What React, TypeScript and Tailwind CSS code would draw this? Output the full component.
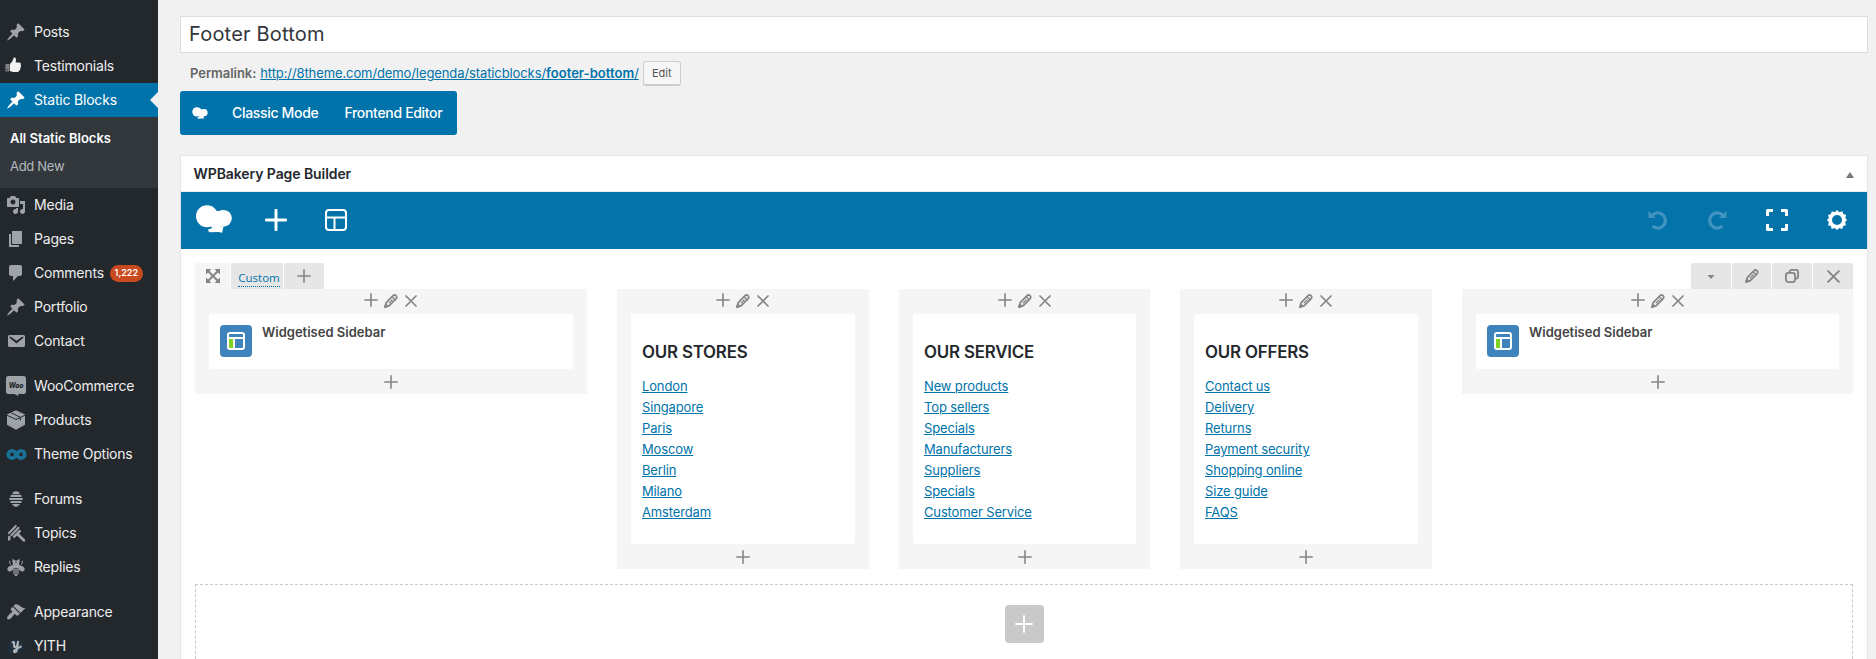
import React from "react";

const ICONS: Record<string, string> = {
  pin: "M10.44 3.02l1.82-1.82 6.36 6.35-1.83 1.82c-1.05-.68-2.48-.57-3.41.36l-.75.75c-.92.93-1.04 2.35-.35 3.41l-1.83 1.82-2.41-2.41-2.8 2.79c-.42.42-3.38 2.71-3.8 2.29s1.86-3.39 2.28-3.81l2.79-2.79L4.1 9.36l1.83-1.82c1.05.69 2.48.57 3.4-.36l.75-.75c.93-.92 1.05-2.35.36-3.41z",
  media: "M13 11V4c0-.55-.45-1-1-1h-1.67L9 1H5L3.67 3H2c-.55 0-1 .45-1 1v7c0 .55.45 1 1 1h10c.55 0 1-.45 1-1zM7 4.5c1.38 0 2.5 1.12 2.5 2.5S8.38 9.5 7 9.5 4.5 8.38 4.5 7 5.62 4.5 7 4.5zM14 6h5v10.5c0 1.38-1.12 2.5-2.5 2.5S14 17.88 14 16.5s1.12-2.5 2.5-2.5c.17 0 .34.02.5.05V9h-3V6zm-4 8.05V13h2v3.5c0 1.38-1.12 2.5-2.5 2.5S7 17.88 7 16.5 8.12 14 9.5 14c.17 0 .34.02.5.05z",
  pages: "M6 15V2h10v13H6zm-1 1h8v2H3V5h2v11z",
  comments: "M5 2h9c1.1 0 2 .9 2 2v7c0 1.1-.9 2-2 2h-2l-5 5v-5H5c-1.1 0-2-.9-2-2V4c0-1.1.9-2 2-2z",
  mail: "M3.87 4h13.25C18.37 4 19 4.59 19 5.79v8.42c0 1.19-.63 1.79-1.88 1.79H3.87c-1.25 0-1.88-.6-1.88-1.79V5.79c0-1.2.63-1.79 1.88-1.79zm6.62 8.6l6.74-5.53c.24-.2.43-.66.13-1.07-.29-.41-.82-.42-1.17-.17l-5.7 3.86L4.8 5.83c-.35-.25-.88-.24-1.17.17-.3.41-.11.87.13 1.07z",
  brush: "M14.48 11.06L7.41 3.99l1.5-1.5c.5-.56 2.3-.47 3.51.32 1.21.8 1.43 1.28 2.91 2.1 1.18.64 2.45 1.26 4.45.85zm-.71.71L6.7 4.7 4.93 6.47c-.39.39-.39 1.02 0 1.41l1.06 1.06c.39.39.39 1.03 0 1.42-.6.6-1.43 1.11-2.21 1.69-.35.26-.7.53-1.01.84C1.43 14.23.4 16.08 1.4 17.07c.99 1 2.84-.03 4.18-1.36.31-.31.58-.66.85-1.02.57-.78 1.08-1.61 1.69-2.21.39-.39 1.02-.39 1.41 0l1.06 1.06c.39.39 1.02.39 1.41 0z",
};

function MenuIcon({ name }: { name: string }) {
  let body: React.ReactNode;
  switch (name) {
    case "thumb":
      body = (
        <>
          <rect x="-.6" y="8" width="3.8" height="7.4" fill="#7d8186" />
          <rect x=".6" y="13" width="1.2" height="1.2" fill="#23282d" />
          <path fill="#f1f1f1" d="M3.8 8.2C5.6 6.6 7 4.8 7.4 2.6c.1-1 1.2-1.6 2-.8.9.9.6 3 .2 4.7h3.6c1.3 0 2 1 1.5 2 .5.6.5 1.5 0 2 .3.8.1 1.5-.5 1.9.2 1.1-.1 1.8-.9 2.2-.2.9-.8 1.3-1.8 1.3H7.3c-1.4 0-2.4-.6-3.5-.8z" />
        </>
      );
      break;
    case "woo":
      body = (
        <>
          <path d="M2.5 0h15A2.5 2.5 0 0 1 20 2.500v13a2.500 2.500 0 0 1-2.500 2.500H12l.5 2.200L8.500 18h-6A2.500 2.500 0 0 1 0 15.500v-13A2.500 2.500 0 0 1 2.500 0z" />
          <text x="10" y="11.800" textAnchor="middle" fontSize="7.200" fontWeight="800" fontStyle="italic" fill="#23282d" className="font-['Inter',sans-serif]" textLength="14.500" lengthAdjust="spacingAndGlyphs">Woo</text>
        </>
      );
      break;
    case "box":
      body = (
        <>
          <path d="M10 .2l9 4.300v10.300l-9 5-9-5V4.500z" />
          <path d="M1 5.200l9 4.300 9-4.300M5.300 2.900l9 4.400v3.200" fill="none" stroke="#23282d" strokeWidth="1" />
        </>
      );
      break;
    case "infinity":
      body = (
        <g fill="none" stroke="#1a7299" strokeWidth="3.600">
          <circle cx="6" cy="10.400" r="3.700" />
          <circle cx="15" cy="10.400" r="3.700" />
        </g>
      );
      break;
    case "hive":
      body = (
        <g>
          <path d="M6.200 5.300C6.200 3.300 8 2.200 10 2.200s3.800 1.100 3.800 3.100z" />
          <rect x="4.200" y="6" width="11.600" height="2" rx="1" />
          <rect x="3" y="9" width="14" height="2" rx="1" />
          <rect x="4.200" y="12" width="11.600" height="2" rx="1" />
          <path d="M6 15h8c-.4 1.400-1.500 1.600-2.200 2L10 18.300l-1.800-1.300c-.7-.4-1.800-.6-2.200-2z" />
        </g>
      );
      break;
    case "topics":
      body = (
        <g fill="none" stroke="#9ea3a8" strokeLinecap="round">
          <path d="M2.800 10.200l7-7.200M5.300 12.200l7.200-7.400" strokeWidth="2" />
          <path d="M8.200 13.700l5.500-5.500" strokeWidth="2.600" />
          <path d="M12 11.500l5.800 5.700" strokeWidth="2.800" />
          <path d="M3.200 14v2.400" strokeWidth="2.400" />
        </g>
      );
      break;
    case "bee":
      body = (
        <g>
          <circle cx="8" cy="4.600" r="1.800" />
          <circle cx="12" cy="4.600" r="1.800" />
          <rect x="7" y="5.800" width="6" height="3.600" />
          <path d="M8.500 8C5.500 8 2 9.300 1.400 11.600 1 13.600 2.400 14.600 4.200 14.400 6.500 14 8 11.500 9 9zM11.500 8c3 0 6.500 1.300 7.100 3.600.4 2-1 3-2.800 2.800C13.500 14 12 11.500 11 9z" />
          <path d="M7.200 9h5.600v6.500c0 1.500-1.300 2.900-2.800 3.700-1.500-.8-2.800-2.200-2.800-3.700z" />
          <path d="M7.600 11.800h4.800M7.600 14h4.800M7.800 16.200h4.400" stroke="#23282d" strokeWidth=".9" />
          <path d="M5.400 7.800C4 7 3.300 5.500 3.700 3.800M14.600 7.800c1.400-.8 2.100-2.300 1.700-4M7.500 3l-.9-1.200M12.500 3l.9-1.200" stroke="#9ea3a8" strokeWidth="1" fill="none" />
        </g>
      );
      break;
    case "yith":
      body = (
        <>
          <circle cx="10" cy="10" r="7.800" fill="#20303f" />
          <path d="M2.200 10v7.800H10z" fill="#20303f" />
          <path d="M6.500 6.300c1.700-.8 1.900.4 1.600 2-.4 1.900-.2 2.900 1.100 2.700 1.600-.3 2.400-2.700 2.800-5.200M12 5.800c-.2 4-.4 7.800-1.900 9.800-.8 1-2.300.9-2.200-.4.200-1.500 3.500-2.700 7-4.600" fill="none" stroke="#b0b5ba" strokeWidth="2" strokeLinecap="round" />
        </>
      );
      break;
    default:
      body = <path d={ICONS[name]} />;
  }
  return (
    <svg viewBox="0 0 20 20" className="h-5 w-5 shrink-0 overflow-visible" fill="currentColor">
      {body}
    </svg>
  );
}

function MenuItem({ icon, label, active, badge }: { icon: string; label: string; active?: boolean; badge?: string }) {
  return (
    <div
      className={
        "relative flex h-[34px] shrink-0 items-center gap-2 pl-1.5 text-[14px] tracking-[-0.2px] " +
        (active ? "bg-[#0073aa] text-white" : "text-[#eee]")
      }
    >
      <span className={active ? "text-white" : "text-[#9ea3a8]"}>
        <MenuIcon name={icon} />
      </span>
      <span className="pb-0.5">{label}</span>
      {badge && (
        <span className="-ml-[2px] flex h-[17px] w-[33px] items-center justify-center rounded-full bg-[#ca4a1f] text-[9px] font-semibold tracking-normal text-white">
          {badge}
        </span>
      )}
      {active && (
        <span className="absolute top-[9px] right-0 h-0 w-0 border-y-8 border-r-8 border-y-transparent border-r-[#f1f1f1]" />
      )}
    </div>
  );
}

function Sidebar() {
  return (
    <nav className="flex w-[158px] shrink-0 flex-col overflow-hidden bg-[#23282d] pt-[15px]">
      <MenuItem icon="pin" label="Posts" />
      <MenuItem icon="thumb" label="Testimonials" />
      <MenuItem icon="pin" label="Static Blocks" active />
      <div className="flex h-[71px] shrink-0 flex-col bg-[#32373c] pt-[7px] pl-2.5 text-[13px] leading-7">
        <span className="font-semibold text-white">All Static Blocks</span>
        <span className="tracking-[-0.3px] text-[#b4b9be]">Add New</span>
      </div>
      <MenuItem icon="media" label="Media" />
      <MenuItem icon="pages" label="Pages" />
      <MenuItem icon="comments" label="Comments" badge="1,222" />
      <MenuItem icon="pin" label="Portfolio" />
      <MenuItem icon="mail" label="Contact" />
      <div className="h-[11px] shrink-0" />
      <MenuItem icon="woo" label="WooCommerce" />
      <MenuItem icon="box" label="Products" />
      <MenuItem icon="infinity" label="Theme Options" />
      <div className="h-[11px] shrink-0" />
      <MenuItem icon="hive" label="Forums" />
      <MenuItem icon="topics" label="Topics" />
      <MenuItem icon="bee" label="Replies" />
      <div className="h-[11px] shrink-0" />
      <MenuItem icon="brush" label="Appearance" />
      <MenuItem icon="yith" label="YITH" />
    </nav>
  );
}

function Logo({ className }: { className: string }) {
  return (
    <svg viewBox="0 0 36 28" className={className} fill="#fff">
      <circle cx="11" cy="11.300" r="11" />
      <circle cx="27.400" cy="13.300" r="8.400" />
      <path d="M17 3.500c2.500 2.700 5 3 9 2v16l-11 1z" />
      <path d="M12 24.500c3-.5 4.500-1.500 6-3.500l9.500.500-1.400 6.200-3.600-.700-9.500.200z" />
    </svg>
  );
}

function Plus({ size, stroke = 1.6 }: { size: number; stroke?: number }) {
  return (
    <svg viewBox="0 0 14 14" width={size} height={size} className="shrink-0" fill="none" stroke="currentColor" strokeWidth={stroke} strokeLinecap="round">
      <path d="M7 .8v12.400M.8 7h12.400" />
    </svg>
  );
}

function Cross({ className }: { className: string }) {
  return (
    <svg viewBox="0 0 12 12" className={className} fill="none" stroke="currentColor" strokeWidth="1.700" strokeLinecap="round">
      <path d="M1 1l10 10M11 1L1 11" />
    </svg>
  );
}

function Pencil({ className }: { className: string }) {
  return (
    <svg viewBox="0 0 14 14" className={className} fill="none" stroke="currentColor" strokeLinejoin="round">
      <path d="M1 13l1.200-4.300 6.600-6.800c1-1.100 2.200-1.100 3.200-.3 1 1 1 2.200 0 3.200L5.300 11.600z" strokeWidth="1.700" />
      <path d="M4.800 9.400l3.800-3.900" strokeWidth="1.200" />
      <path d="M8.200 2.800l3 3M.8 13.300l1-3 2.200 2z" strokeWidth="1.400" />
    </svg>
  );
}

function Column({ children }: { children: React.ReactNode }) {
  return (
    <div className="flex flex-col bg-[#f5f5f5] px-3.5 text-[#858585]">
      <div className="flex h-[25px] items-center justify-center gap-1.5 pr-px pb-[3px]">
        <Plus size={14} />
        <Pencil className="mt-0.5 h-3.5 w-3.5" />
        <Cross className="mt-px ml-[1px] h-3 w-3" />
      </div>
      <div className="rounded-xs bg-white">{children}</div>
      <div className="flex h-[25px] items-center justify-center">
        <Plus size={14} />
      </div>
    </div>
  );
}

function WidgetCard() {
  return (
    <div className="flex h-[55px] gap-2.5 p-[11px]">
      <div className="flex h-8 w-8 items-center justify-center rounded bg-[#3e83bb]">
        <svg viewBox="0 0 18 18" className="h-[18px] w-[18px]">
          <rect x="2" y="6.500" width="4.500" height="9.500" fill="#7ed321" />
          <rect x="1" y="1" width="16" height="16" rx="2" fill="none" stroke="#fff" strokeWidth="2" />
          <path d="M1 6h16M7 6v11" stroke="#fff" strokeWidth="2" />
        </svg>
      </div>
      <span className="text-[13px] leading-[15px] font-semibold text-[#444]">Widgetised Sidebar</span>
    </div>
  );
}

function LinkCard({ title, links }: { title: string; links: string[] }) {
  return (
    <div className="flex h-[230px] flex-col items-start px-[11px] pt-[27px]">
      <h3 className="text-[16.9px] leading-[22px] font-semibold tracking-[-0.2px] text-[#23282d]">{title}</h3>
      <div className="mt-[13px] flex flex-col items-start">
        {links.map((l, i) => (
          <a key={i} className="text-[13px] leading-[21px] tracking-[-0.14px] text-[#0073aa] underline underline-offset-1">{l}</a>
        ))}
      </div>
    </div>
  );
}

const TAB = "flex h-[26px] items-center justify-center rounded-t-xs bg-[#e6e6e6] text-[#858585] ";

function Builder() {
  return (
    <section className="mt-5 flex w-[1688px] flex-1 flex-col border border-b-0 border-[#e2e4e7] bg-white">
      <header className="flex h-9 shrink-0 items-center justify-between border-b border-[#eee] pr-[13px] pl-[12.5px]">
        <h2 className="text-[14px] font-semibold tracking-[-0.08px] text-[#23282d]">WPBakery Page Builder</h2>
        <svg viewBox="0 0 8 6" className="mt-0.5 h-1.5 w-2"><path d="M4 0l4 6H0z" fill="#72777c" /></svg>
      </header>
      <div className="flex h-[57px] shrink-0 items-center justify-between bg-[#0473aa] pr-5 pb-px pl-[15px] text-white">
        <div className="flex items-center">
          <Logo className="-mt-0.5 h-7 w-9" />
          <span className="ml-[33px]"><Plus size={22} stroke={1.9} /></span>
          <svg viewBox="0 0 22 22" className="ml-[38px] h-[22px] w-[22px]" fill="none" stroke="#fff" strokeWidth="2">
            <rect x="1" y="1" width="20" height="20" rx="3" />
            <path d="M1 8.500h20M9.500 8.500V21" />
          </svg>
        </div>
        <div className="flex items-center">
          <svg viewBox="0 0 20 20" className="h-5 w-5" fill="none" stroke="#4294c0" strokeWidth="3.200">
            <path d="M4 5.500A7.600 7.600 0 1 1 4.600 16" />
            <path d="M.5 1v7H8z" fill="#4294c0" stroke="none" />
          </svg>
          <svg viewBox="0 0 20 20" className="ml-[39px] h-5 w-5 -scale-x-100" fill="none" stroke="#4294c0" strokeWidth="3.200">
            <path d="M4 5.500A7.600 7.600 0 1 1 4.600 16" />
            <path d="M.5 1v7H8z" fill="#4294c0" stroke="none" />
          </svg>
          <svg viewBox="0 0 22 22" className="ml-[39px] h-[22px] w-[22px]" fill="none" stroke="#fff" strokeWidth="3" strokeLinejoin="round">
            <path d="M1.500 7V1.500H7M15 1.500h5.500V7M20.500 15v5.500H15M7 20.500H1.500V15" />
          </svg>
          <svg viewBox="0 0 20 20" className="ml-[39px] h-5 w-5" fill="#fff" fillRule="evenodd">
            <path d="M10 0l2.300 2.200 3.100-1 .9 2.900 2.900.8-.9 3L20 10l-1.900 2.200.9 3-2.900.8-.8 2.900-3-.9L10 20l-2.300-2-3 .9-.8-2.900-2.900-.8.9-3L0 10l1.900-2.100-.9-3 2.900-.8.9-2.900 3 1zM10 5a5 5 0 1 0 0 10A5 5 0 0 0 10 5z" />
          </svg>
        </div>
      </div>
      <div className="flex flex-1 flex-col px-3.5 pt-3.5">
        <div className="flex justify-between">
          <div className="flex gap-px">
            <div className="flex h-[26px] w-[35px] items-center justify-center rounded-t-xs bg-[#f5f5f5]">
              <svg viewBox="0 0 14 14" className="h-3.5 w-3.5" fill="#858585" stroke="#858585" strokeWidth="1.900">
                <path d="M2 2l10 10M12 2L2 12" />
                <path d="M0 0h5.500L0 5.500zM14 0v5.500L8.500 0zM0 14V8.500L5.500 14zM14 14H8.500L14 8.500z" stroke="none" />
              </svg>
            </div>
            <div className={TAB + "w-[52px] pl-1"}>
              <span className="mt-1 h-[18px] border-b border-dotted border-[#0073aa] font-['Open_Sans',sans-serif] text-[11.5px] leading-[18px] text-[#0073aa]">Custom</span>
            </div>
            <div className={TAB + "w-10"}><Plus size={14} /></div>
          </div>
          <div className="flex gap-px">
            <div className={TAB + "w-10"}>
              <svg viewBox="0 0 8 4" className="mt-0.5 h-1 w-2"><path d="M.5 0h7L4 4z" fill="#858585" /></svg>
            </div>
            <div className={TAB + "w-[39px]"}><Pencil className="h-3.5 w-3.5" /></div>
            <div className={TAB + "w-10"}>
              <svg viewBox="0 0 14 14" className="h-3.5 w-3.5" fill="none" stroke="currentColor" strokeWidth="1.800">
                <rect x=".9" y="3.900" width="9.200" height="9.200" rx="2.500" />
                <path d="M4.500 3.500V3A2.100 2.100 0 0 1 6.600.9H11A2.100 2.100 0 0 1 13.100 3v4.400a2.100 2.100 0 0 1-2.100 2.100h-.6" />
              </svg>
            </div>
            <div className={TAB + "w-10"}><Cross className="h-[13px] w-[13px]" /></div>
          </div>
        </div>
        <div className="grid grid-cols-[392px_252px_251px_252px_391px] items-start gap-x-[30px]">
          <Column><WidgetCard /></Column>
          <Column>
            <LinkCard title="OUR STORES" links={["London", "Singapore", "Paris", "Moscow", "Berlin", "Milano", "Amsterdam"]} />
          </Column>
          <Column>
            <LinkCard title="OUR SERVICE" links={["New products", "Top sellers", "Specials", "Manufacturers", "Suppliers", "Specials", "Customer Service"]} />
          </Column>
          <Column>
            <LinkCard title="OUR OFFERS" links={["Contact us", "Delivery", "Returns", "Payment security", "Shopping online", "Size guide", "FAQS"]} />
          </Column>
          <Column><WidgetCard /></Column>
        </div>
        <div className="mt-[15px] flex flex-1 justify-center border border-b-0 border-dashed border-[#c9c9c9] pt-5">
          <div className="flex h-[38px] w-[39px] items-center justify-center rounded bg-[#c9c9c9] text-white">
            <Plus size={18} stroke={1.5} />
          </div>
        </div>
      </div>
    </section>
  );
}

export default function App() {
  return (
    <div className="flex h-[659px] w-[1876px] overflow-hidden bg-[#f1f1f1] font-['Inter',sans-serif]">
      <Sidebar />
      <main className="flex flex-1 flex-col items-start pt-4 pl-[22px]">
        <div className="flex h-[37px] w-[1688px] shrink-0 items-center border border-[#ddd] bg-white pb-px pl-2 text-[20px] tracking-[0.2px] text-[#32373c]">
          Footer Bottom
        </div>
        <div className="mt-2 flex h-[25px] shrink-0 items-center pl-2.5 text-[13px]">
          <span className="font-semibold tracking-[-0.05px] text-[#666]">Permalink:</span>
          <a className="ml-1 tracking-[-0.1px] text-[#0073aa] underline underline-offset-1">
            http://8theme.com/demo/legenda/staticblocks/<span className="font-semibold tracking-[0.03px]">footer-bottom</span>/
          </a>
          <button className="ml-1 flex h-[25px] w-[38px] items-center justify-center rounded-[3px] border border-b-2 border-[#ccc] bg-[#f7f7f7] text-[11px] text-[#555]">
            Edit
          </button>
        </div>
        <div className="mt-[5px] flex h-11 w-[277px] shrink-0 items-center rounded-[3px] bg-[#0073aa] pl-3 text-[14px] font-medium tracking-[-0.32px] text-white">
          <Logo className="h-3 w-4" />
          <span className="ml-6 pb-0.5">Classic Mode</span>
          <span className="ml-[26px] pb-0.5">Frontend Editor</span>
        </div>
        <Builder />
      </main>
    </div>
  );
}
